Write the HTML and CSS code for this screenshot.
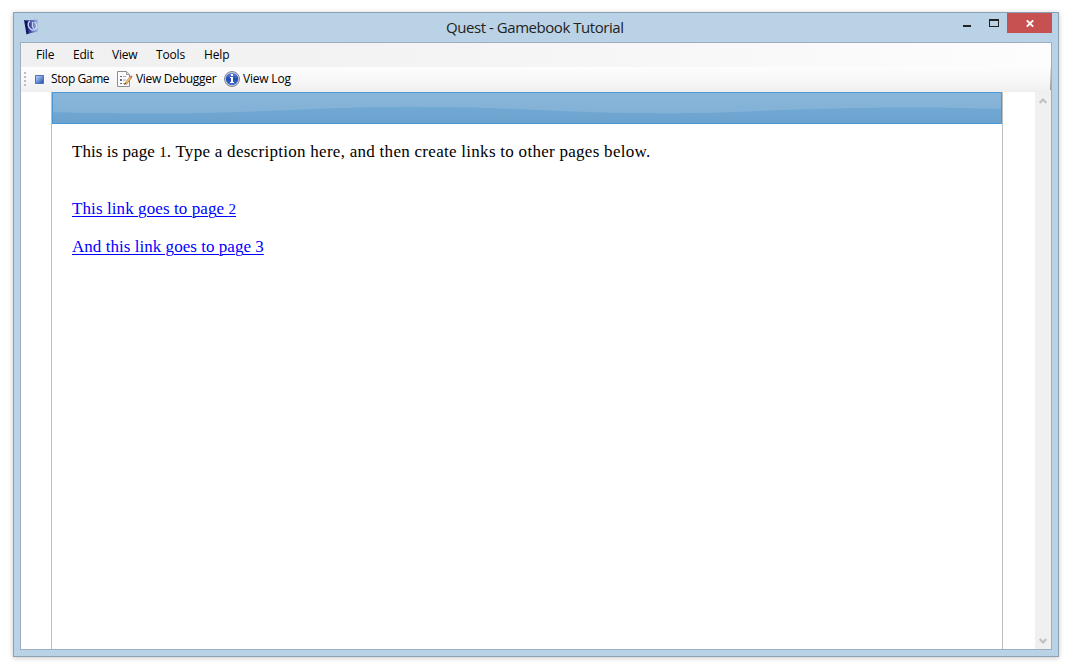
FILE: index.html
```
<!DOCTYPE html>
<html lang="en">
<head>
<meta charset="utf-8">
<title>Quest - Gamebook Tutorial</title>
<link rel="stylesheet" href="styles.css">
</head>
<body>
<div class="window">
  <header class="titlebar">
    <svg class="app-icon" width="16" height="16" viewBox="0 0 16 16">
      <defs>
        <linearGradient id="book" x1="0" x2="1"><stop offset="0" stop-color="#10156a"/><stop offset=".45" stop-color="#5262b0"/><stop offset="1" stop-color="#a4c2f2"/></linearGradient>
      </defs>
      <path d="M0 1L5 2V14.500L2.500 15.500Z" fill="#11145f"/>
      <path d="M2.500 1.500L14 .5V12.500L4 14.800Z" fill="url(#book)"/>
      <path d="M6 2C3 4 4 9 7 10.500C10 12 13.500 10 12.500 6C12 4 11 3.500 10 3.500" fill="none" stroke="#d5def5" stroke-width="1.200"/>
      <path d="M8.500 3V7.500L10 10" fill="none" stroke="#c9d5f2" stroke-width="1.200"/>
    </svg>
    <h1 class="title">Quest - Gamebook Tutorial</h1>
    <div class="controls">
      <svg class="control" width="26" height="20" viewBox="0 0 26 20"><path d="M0 12h8v2H0z" fill="#222"/></svg>
      <svg class="control" width="18" height="20" viewBox="0 0 18 20"><path d="M0 6h10v8H0zM1 8v5h8V8z" fill="#222" fill-rule="evenodd"/></svg>
      <span class="close"><svg width="8" height="7" viewBox="0 0 8 7"><path d="M.8.3L7.200 6.700M7.200.3L.8 6.700" stroke="#fff" stroke-width="1.8"/></svg></span>
    </div>
  </header>
  <div class="client">
    <nav class="menu">
      <span class="m-file">File</span><span class="m-edit">Edit</span><span class="m-view">View</span><span class="m-tools">Tools</span><span class="m-help">Help</span>
    </nav>
    <div class="toolbar">
      <svg class="grip" width="2" height="15" viewBox="0 0 2 15"><path d="M0 0h2v2H0zM0 4h2v2H0zM0 8h2v2H0zM0 12h2v2H0z" fill="#bdbdbd"/></svg>
      <div class="tool stop">
        <svg width="9" height="9" viewBox="0 0 9 9"><defs><linearGradient id="stop" x2="1" y2="1"><stop stop-color="#c4dafb"/><stop offset="1" stop-color="#1c4eae"/></linearGradient></defs><path d="M.5.5h8v8h-8z" fill="url(#stop)" stroke="#4a72bc"/></svg>
        <span class="t-stop">Stop Game</span>
      </div>
      <div class="tool debugger">
        <svg width="16" height="16" viewBox="0 0 16 16">
          <path d="M.5.5h9l3 3v12H.5z" fill="#fbfbfb" stroke="#8d8d8d"/><path d="M9.500.5v3h3" fill="#ddd" stroke="#999"/>
          <path d="M3 5h2v1H3zM3 8h2v2H3zM3 12h2v1H3z" fill="#62688f"/><path d="M6 5.500h3M6 9h3M6 12.500h2" stroke="#a5a9c2"/>
          <path d="M8.500 13L14 6" stroke="#a97835" stroke-width="2.600"/><path d="M9 12.300L13.600 6.300" stroke="#f3c56d" stroke-width="1.400"/><path d="M13.500 6.500L15 5" stroke="#cd7668" stroke-width="2"/><path d="M7 14l1-2 1 1z" fill="#333"/>
        </svg>
        <span class="t-debugger">View Debugger</span>
      </div>
      <div class="tool log">
        <svg width="16" height="16" viewBox="0 0 16 16"><defs><linearGradient id="info" y2="1" x2="0"><stop stop-color="#6b8ee2"/><stop offset=".5" stop-color="#1f49b4"/><stop offset="1" stop-color="#4674d7"/></linearGradient></defs><circle cx="8" cy="8" r="7.500" fill="#d5d5df" stroke="#85858e"/><circle cx="8" cy="8" r="6.200" fill="url(#info)"/><path d="M7 3h2v2H7zM6 6h3v5h1v1H6v-1h1V7H6z" fill="#fff"/></svg>
        <span class="t-log">View Log</span>
      </div>
      <i class="toolbar-end"></i>
    </div>
    <main class="viewport">
      <article class="page">
        <svg class="banner" width="950" height="32" viewBox="0 0 950 32">
          <defs><linearGradient id="top" x2="0" y2="1"><stop stop-color="#8ab6d9"/><stop offset="1" stop-color="#82b1d7"/></linearGradient><linearGradient id="low" x2="0" y1=".4" y2="1"><stop stop-color="#73aad4"/><stop offset="1" stop-color="#6ba2ce"/></linearGradient></defs>
          <path d="M0 0h950v32H0z" fill="url(#low)"/>
          <path d="M0 0H950V17C850 14 780 16 705 19C650 22 580 22 510 19C430 15 350 13 260 17C180 21 100 23 0 20Z" fill="url(#top)"/>
          <path d="M.5.5h949v31H.5z" fill="none" stroke="#4a98d5"/>
        </svg>
        <div class="story">
          <p class="description"><span class="lead">This is page <span class="old">1</span>. </span>Type a description here, and then create links to other pages below.</p>
          <p class="link"><a class="l-two" href="#">This link goes to page <span class="old">2</span></a></p>
          <p class="link"><a class="l-three" href="#">And this link goes to page 3</a></p>
        </div>
      </article>
      <aside class="scrollbar">
        <svg width="8" height="6" viewBox="0 0 8 6"><path d="M.7 5L4 1.500L7.300 5" fill="none" stroke="#bfbfbf" stroke-width="2"/></svg>
        <svg width="8" height="6" viewBox="0 0 8 6"><path d="M.7 1L4 4.500L7.300 1" fill="none" stroke="#bfbfbf" stroke-width="2"/></svg>
      </aside>
    </main>
  </div>
</div>
</body>
</html>
```
FILE: styles.css
```
* { box-sizing: border-box; }
body { margin: 0; padding: 12px 13px; height: 672px; overflow: hidden; background: #fff; font: 12px/16px "Open Sans", sans-serif; color: #000; }
.window { width: 1046px; height: 645px; border: 1px solid #8ca2b4; background: #bad2e6; box-shadow: 0 1px 5px rgba(0,0,0,.22); padding: 0 6px 6px; display: flex; flex-direction: column; }
.titlebar { height: 29px; display: grid; grid-template-columns: 426px 1fr 89px; }
.app-icon { margin: 6px 0 0 4px; }
.title { margin: 3px 0 0; font-size: 15px; line-height: 22px; font-weight: 400; color: #222; white-space: nowrap; letter-spacing: -.45px; }
.controls { display: flex; }
.close { width: 45px; height: 20px; background: #c75050; display: flex; align-items: center; justify-content: center; }
.client { flex: 1; min-height: 0; border: 1px solid #9aafc1; display: flex; flex-direction: column; background: #fff; }
.menu { height: 24px; flex: none; display: flex; padding: 4px 0 0 15px; background: linear-gradient(90deg, #f0f0f0 0, #f3f3f3 35%, #fdfdfd 100%); }
.menu span, .tool span { white-space: nowrap; }
.m-file { width: 37px; letter-spacing: -.2px; }
.m-edit { width: 39px; letter-spacing: -.2px; }
.m-view { width: 44px; letter-spacing: -.2px; }
.m-tools { width: 48px; letter-spacing: -.15px; }
.m-help { letter-spacing: -.15px; }
.toolbar { height: 25px; flex: none; display: flex; align-items: flex-start; padding: 4px 0 0 3px; background: linear-gradient(#fdfdfd, #f8f8f8 50%, #efefef); }
.grip { margin: 1px 9px 0 0; }
.tool { display: flex; }
.stop { width: 82px; gap: 7px; }
.stop svg { margin-top: 4px; }
.debugger { width: 107px; gap: 3px; }
.log { gap: 3px; }
.t-stop { letter-spacing: -.4px; }
.t-debugger { letter-spacing: -.3px; }
.t-log { letter-spacing: -.2px; }
.toolbar-end { width: 1px; height: 23px; margin: -4px 0 0 auto; background: linear-gradient(#eee, #999); }
.viewport { flex: 1; min-height: 0; display: flex; justify-content: space-between; padding-left: 30px; }
.page { width: 952px; border: solid #bdbdbd; border-width: 0 1px; }
.banner { display: block; }
.story { padding: 18px 20px; font: 17px/19px "Liberation Serif", serif; white-space: nowrap; }
.story p { margin: 0; }
.story .description { margin-bottom: 38px; letter-spacing: .28px; }
.description .lead { letter-spacing: .06px; }
.story .link { margin-bottom: 19px; }
.story a { color: #00f; text-decoration: underline; text-underline-offset: 2px; text-decoration-thickness: 1px; }
.l-two { letter-spacing: .09px; }
.l-three { letter-spacing: .04px; }
.old { font-size: 15px; line-height: 1; }
.scrollbar { width: 16px; background: #f0f0f0; display: flex; flex-direction: column; align-items: center; justify-content: space-between; padding: 6px 1px 5px 0; }
```
